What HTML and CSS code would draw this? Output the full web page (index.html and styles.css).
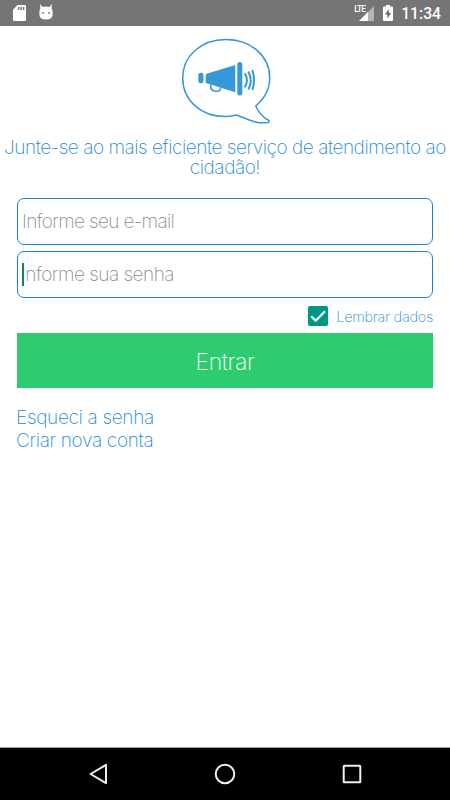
FILE: index.html
```html
<!DOCTYPE html>
<html lang="pt-BR">
<head>
    <meta charset="UTF-8">
    <meta name="viewport" content="width=device-width, initial-scale=1.0">
    <title>Entrar</title>
    <link rel="stylesheet" href="styles.css">
</head>
<body>
    <header class="status-bar">
        <svg class="icon-sd" width="13" height="16" viewBox="0 0 13 16">
            <path fill="#fff" d="M4.5 0H12a1 1 0 0 1 1 1v14a1 1 0 0 1-1 1H1a1 1 0 0 1-1-1V4.8z"/>
            <path stroke="#757575" stroke-width="1.5" d="M5.6 2v3M8.1 2v3M10.6 2v3"/>
        </svg>
        <svg class="icon-droid" width="14" height="16" viewBox="0 0 14 16">
            <path fill="#fff" d="M1 0l2.600 3q3.400-1 6.800 0L13 0l-.4 4.800q1 1.200 1 3v2.700q0 5-6.600 5t-6.600-5V7.800q0-1.800 1-3z"/>
            <circle cx="4" cy="9" r=".9" fill="#757575"/>
            <circle cx="10" cy="9" r=".9" fill="#757575"/>
        </svg>
        <div class="status-right">
            <span class="lte">LTE</span>
            <svg class="icon-signal" width="15" height="15" viewBox="0 0 16 16">
                <path fill="#b5b5b5" d="M16 0v16H0z"/>
                <path fill="#fff" d="M9.500 6.500V16H0z"/>
            </svg>
            <svg class="icon-battery" width="10" height="16" viewBox="0 0 10 16">
                <path fill="#fff" d="M3 0h4v1.600h2a1 1 0 0 1 1 1V15a1 1 0 0 1-1 1H1a1 1 0 0 1-1-1V2.600a1 1 0 0 1 1-1h2z"/>
                <path fill="#656565" d="M5.800 4L2 9.500h2.400V13.500L8 8H5.800z"/>
            </svg>
            <span class="clock">11:34</span>
        </div>
    </header>

    <main class="login">
        <svg class="logo" width="90" height="87" viewBox="0 0 90 87">
            <path fill="none" stroke="#3498db" stroke-width="1.500" stroke-linejoin="round" d="M55.500 77C64 80 75 86.500 87 84.500Q89.500 83.500 87 82C81 79 77.500 74 74.700 68C83 61 88.700 52 88.700 40C88.700 17 69 1.500 45 1.500C20 1.500 1.700 18 1.700 40C1.700 63 21 79 45 78.500Q50.500 78.200 55.500 77z"/>
            <g fill="#3498db">
                <rect x="17.300" y="34.800" width="5.200" height="10.500" rx="2.400"/>
                <path d="M24.700 36L54.300 27V54.300L24.700 45z"/>
                <rect x="56.300" y="24" width="5" height="33.500" rx="2.500"/>
            </g>
            <g fill="none" stroke="#3498db" stroke-width="1.500">
                <path d="M29.700 46.500q-.8 6 4.500 6.800 5.300.5 5.600-3.800"/>
                <path stroke-width="2" d="M63.800 35.300q4.200 7 0 14M67.300 33.500q5 9 0 18M71.300 32q3.500 10 0 20"/>
            </g>
        </svg>
        <h1 class="slogan">Junte-se ao mais eficiente serviço de atendimento ao cidadão!</h1>

        <form class="form">
            <input class="field field-email" type="text" placeholder="Informe seu e-mail">
            <div class="password">
                <input class="field field-senha" type="password" placeholder="Informe sua senha">
                <span class="cursor"></span>
            </div>
            <label class="remember">
                <svg width="20" height="20" viewBox="0 0 20 20">
                    <rect width="20" height="20" rx="2" fill="#009688"/>
                    <path fill="none" stroke="#fff" stroke-width="2.200" d="M3.200 10.200l4.500 4.500L17 5.300"/>
                </svg>
                <span>Lembrar dados</span>
            </label>
            <button class="enter" type="button">Entrar</button>
        </form>

        <nav class="links">
            <a class="forgot" href="#">Esqueci a senha</a>
            <a class="create" href="#">Criar nova conta</a>
        </nav>
    </main>

    <footer class="nav-bar">
        <svg width="20" height="22" viewBox="0 0 20 22">
            <path d="M18 1.800v18.400L2.500 11z"/>
        </svg>
        <svg width="22" height="22" viewBox="0 0 22 22">
            <circle cx="11" cy="11" r="9.300"/>
        </svg>
        <svg width="20" height="22" viewBox="0 0 20 22">
            <rect x="1.700" y="2.700" width="16.600" height="16.600" rx=".5"/>
        </svg>
    </footer>
</body>
</html>
```
FILE: styles.css
```css
* {
    box-sizing: border-box;
}
body {
    margin: 0;
    height: 800px;
    display: flex;
    flex-direction: column;
    background-color: #fff;
    font-family: Inter, "Liberation Sans", sans-serif;
    font-weight: 200;
    color: #1c8ad8;
}

.status-bar {
    height: 26px;
    padding: 0 9px 0 13px;
    display: flex;
    align-items: center;
    background-color: #757575;
    color: #fff;
    font-family: Roboto, sans-serif;
}
.icon-droid {
    margin: -2px 0 0 13px;
}
.status-right {
    margin-left: auto;
    display: flex;
    align-items: center;
}
.lte {
    align-self: flex-start;
    margin: 4px -6px 0 0;
    font-size: 8.5px;
    line-height: 10px;
    font-weight: 500;
    letter-spacing: -0.9px;
}
.icon-battery {
    margin: 0 8px 0 9px;
}
.clock {
    font-size: 15.7px;
    font-weight: 500;
    line-height: 26px;
    position: relative;
    top: 1px;
}

.login {
    flex: 1;
    padding: 12px 0 0;
}
.logo {
    display: block;
    margin: 0 auto;
    position: relative;
    left: 1px;
}
.slogan {
    margin: 13px 0 0;
    font-size: 19px;
    line-height: 20px;
    font-weight: 200;
    text-align: center;
    letter-spacing: -0.46px;
}

.form {
    margin: 20px 17px 0 17px;
    display: flex;
    flex-direction: column;
}
.field {
    display: block;
    width: 100%;
    height: 47px;
    padding: 0 4px;
    border: 1px solid #1a80d4;
    border-radius: 7px;
    outline: none;
    background-color: #fff;
    font-family: inherit;
    font-size: 19px;
    font-weight: 200;
}
.field::placeholder {
    color: #8c8c8c;
    opacity: 1;
}
.field-email {
    letter-spacing: -0.65px;
}
.field-senha {
    padding-left: 3px;
    letter-spacing: -0.5px;
}
.password {
    position: relative;
    margin-top: 6px;
}
.cursor {
    position: absolute;
    left: 5px;
    top: 12px;
    width: 2px;
    height: 23px;
    background-color: #128073;
}
.remember {
    margin-top: 8px;
    height: 20px;
    display: flex;
    justify-content: flex-end;
    align-items: center;
    gap: 8px;
    font-size: 14.5px;
    letter-spacing: -0.27px;
}
.enter {
    margin-top: 7px;
    height: 55px;
    padding-top: 3px;
    border: 0;
    background-color: #2ecc71;
    color: #fff;
    font-family: inherit;
    font-size: 23px;
    font-weight: 200;
    letter-spacing: -0.4px;
}

.links {
    margin: 18px 16px 0;
    display: flex;
    flex-direction: column;
    align-items: flex-start;
}
.links a {
    color: inherit;
    font-size: 19px;
    line-height: 23px;
    letter-spacing: -0.32px;
    text-decoration: none;
}

.nav-bar {
    height: 53px;
    padding: 0 88px;
    display: flex;
    justify-content: space-between;
    align-items: center;
    border-top: 1px solid #999;
    background-color: #000;
}
.nav-bar svg {
    fill: none;
    stroke: #f0f0f0;
    stroke-width: 2;
    stroke-linejoin: round;
}
```
